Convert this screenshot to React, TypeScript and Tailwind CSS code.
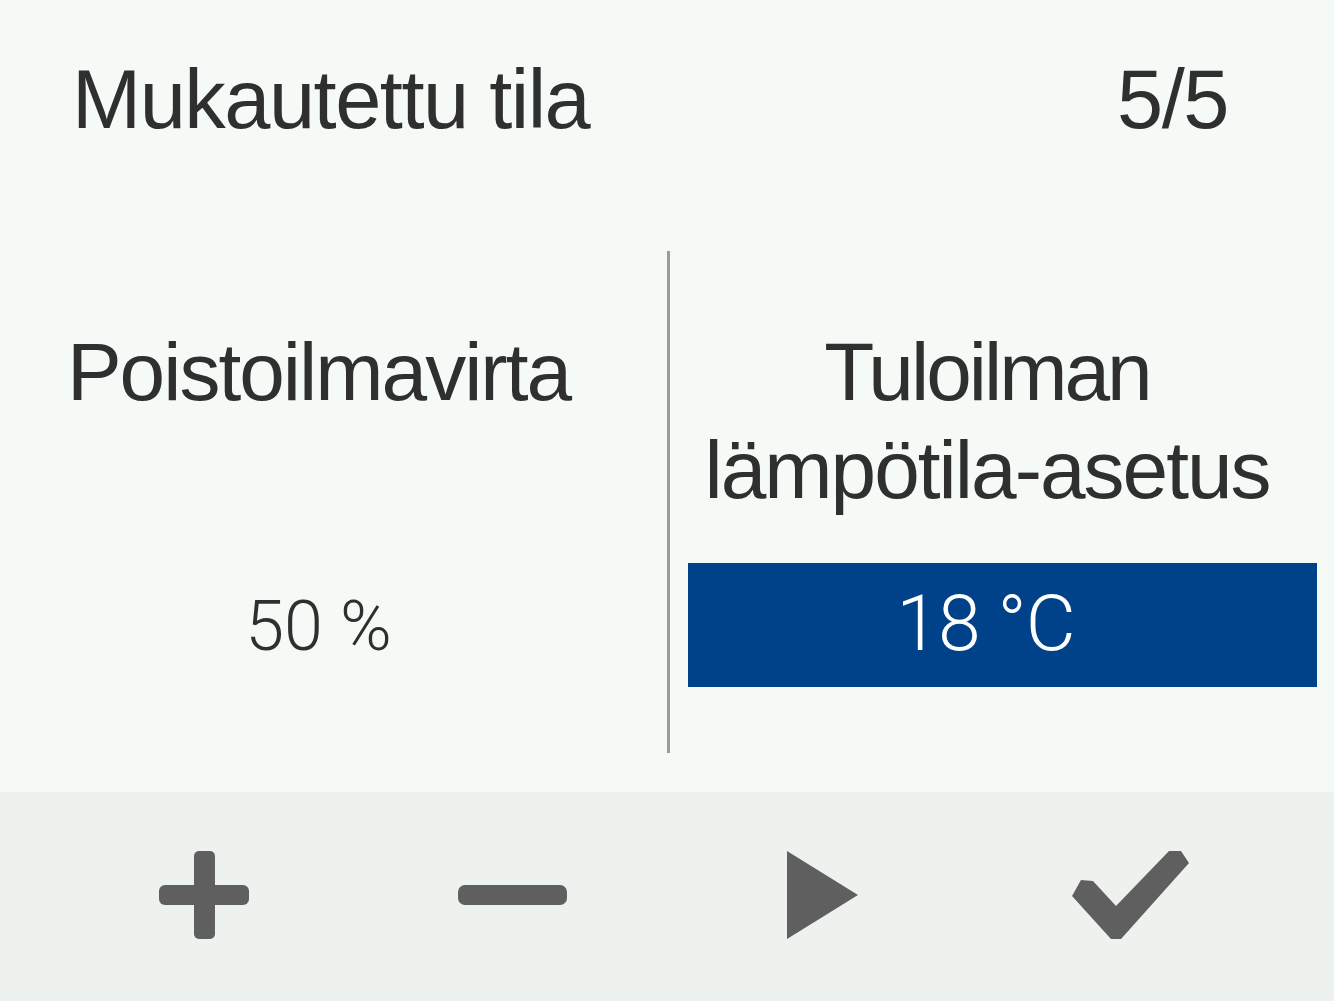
import React from "react";

const font = { fontFamily: '"Liberation Sans", Arial, sans-serif' };

function PlusIcon() {
  return (
    <svg width="90" height="88" viewBox="0 0 90 88">
      <rect x="35" y="0" width="21" height="88" rx="5" fill="#5f5f5f" />
      <rect x="0" y="34" width="90" height="20" rx="6" fill="#5f5f5f" />
    </svg>
  );
}

function MinusIcon() {
  return (
    <svg width="109" height="20" viewBox="0 0 109 20">
      <rect x="0" y="0" width="109" height="20" rx="7" fill="#5f5f5f" />
    </svg>
  );
}

function PlayIcon() {
  return (
    <svg width="71" height="88" viewBox="0 0 71 88">
      <polygon points="0,0 71,44 0,88" fill="#5f5f5f" />
    </svg>
  );
}

function CheckIcon() {
  return (
    <svg width="117" height="88" viewBox="0 0 117 88">
      <polygon
        points="0,45 9,29 21,30 44,55 97,0 109,0 117,12 49,88 39,88"
        fill="#5f5f5f"
      />
    </svg>
  );
}

export default function App() {
  return (
    <div
      className="w-[1334px] h-[1001px] bg-[#f5faf6] text-[#2f2f2f] flex flex-col overflow-hidden"
      style={font}
    >
      <div className="h-[190px] flex items-start justify-between pl-[72px] pr-[106px] pt-[60px] text-[83px] leading-[80px] tracking-[-1.5px]">
        <span>Mukautettu tila</span>
        <span>5/5</span>
      </div>

      <div className="h-[602px] grid grid-cols-[667px_3px_1fr]">
        <div className="flex flex-col pt-[133px] pr-[30px]">
          <div className="text-center text-[82px] leading-[98px] tracking-[-2px]">
            Poistoilmavirta
          </div>
          <div
            className="mt-[143px] h-[124px] flex items-center justify-center text-[70px] font-light"
            style={{ fontFamily: 'Roboto, "Liberation Sans", sans-serif' }}
          >
            50 %
          </div>
        </div>

        <div className="mt-[61px] mb-[39px] bg-[#9b9b9b]" />

        <div className="flex flex-col pt-[133px]">
          <div className="pr-[30px] text-center text-[82px] leading-[98px] tracking-[-2px]">
            <div className="tracking-[-3px]">Tuloilman</div>
            <div>lämpötila-asetus</div>
          </div>
          <div className="mt-[44px] ml-[18px] mr-[17px] h-[124px] bg-[#00428a] flex items-center justify-center pr-[34px]">
            <span
              className="text-white text-[77px] font-light tracking-[-1px]"
              style={{ fontFamily: 'Roboto, "Liberation Sans", sans-serif' }}
            >
              18 °C
            </span>
          </div>
        </div>
      </div>

      <div className="flex-1 bg-[#eef2ef] grid grid-cols-4 px-[50px] items-center pb-[4px]">
        <div className="flex justify-center">
          <PlusIcon />
        </div>
        <div className="flex justify-center">
          <MinusIcon />
        </div>
        <div className="flex justify-center pl-[2px]">
          <PlayIcon />
        </div>
        <div className="flex justify-center pl-[2px]">
          <CheckIcon />
        </div>
      </div>
    </div>
  );
}
